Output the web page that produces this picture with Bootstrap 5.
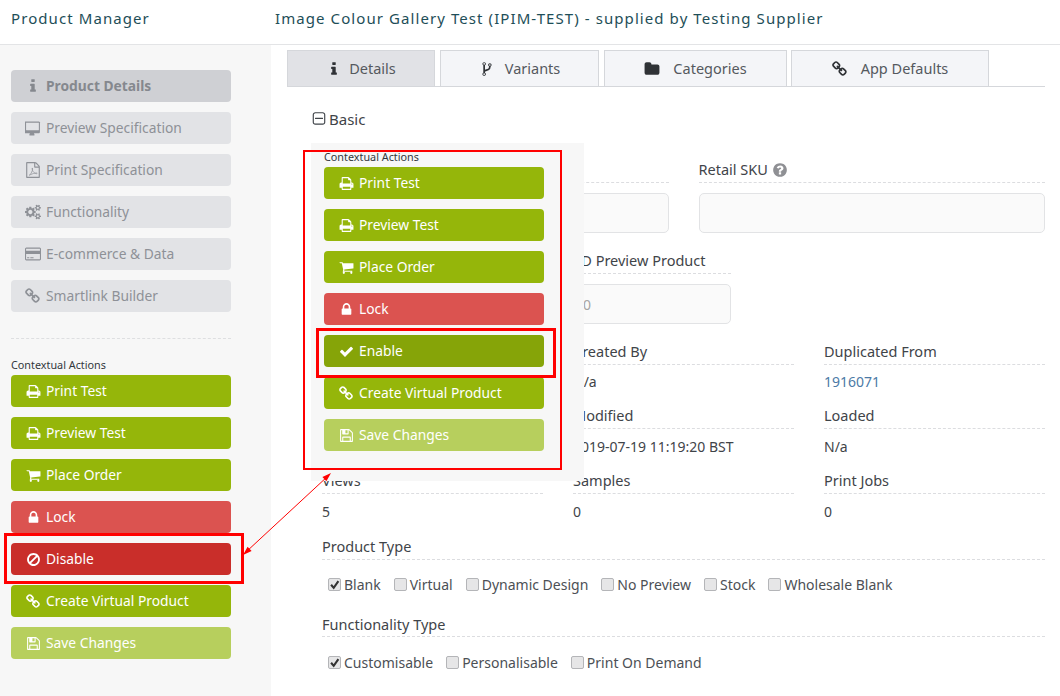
<!DOCTYPE html>
<html lang="en">
<head>
<meta charset="utf-8">
<title>Product Manager</title>
<link href="https://cdn.jsdelivr.net/npm/bootstrap@5.3.0/dist/css/bootstrap.min.css" rel="stylesheet">
<style>
:root{--green:#95b60a;}
html,body{height:696px;overflow:hidden}
body{position:relative;font-family:"Noto Sans","Open Sans",sans-serif;font-size:13.8px;color:#3f4449;background:#fff}
.defs{position:absolute;width:0;height:0}
.ic{width:15px;height:15px;fill:currentColor;flex:none}
.top-bar{height:45px;padding-bottom:8px;border-bottom:1px solid #e3e4e6;color:#1e4e58;font-size:15px;letter-spacing:1.08px}
.brand-name{width:275px;padding-left:11px}
.shell{height:651px}
.side-col{width:271px;background:#f7f7f7;padding:25px 39px 0 11px;flex:none}
.act{display:flex;align-items:center;gap:5px;width:220px;height:32px;padding:0 0 0 15px;margin-bottom:10px;border:0;border-radius:4px;font-size:13.8px;text-align:left;color:#fff;background:var(--green)}
.act:hover,.act:disabled{color:#fff;background:var(--green)}
.act-nav{color:#8e9197;background:#e2e3e6;padding-left:14px;gap:5px}
.act-nav .ic{width:16px;height:16px}
.act-nav:hover{color:#8e9197;background:#e2e3e6}
.act-cur,.act-cur:hover{background:#cfd0d4;font-weight:700;color:#85888e}
.act-red,.act-red:hover{background:#db5350}
.act-dark,.act-dark:hover{background:#c92e2a}
.act-ok,.act-ok:hover{background:#86a408}
.act-save,.act-save:disabled{background:#b7cf5d;opacity:1}
.side-rule{border-top:1px dashed #dedfe1;margin:26px 0 19px;width:220px}
.cap{font-size:10.8px;line-height:14px;margin-bottom:3px;color:#33383d}
.pane{padding:5px 15px 0 16px}
.tabs{gap:5px;border-bottom:1px solid #d5d7db;height:37px}
.tabs .nav-link{display:flex;align-items:center;justify-content:center;gap:13px;height:37px;padding:0;border:1px solid #d5d7db;border-radius:0;background:#f4f5f8;color:#55595e;font-size:14.5px}
.tabs .nav-link.active{background:#e1e2e6;color:#55595e;border-color:#d5d7db}
.tabs .ic{color:#2f3236;width:16px;height:16px}
.tabs .nav-link.t1{width:148px;gap:7px}
.tabs .nav-link.t2{width:159px;gap:10px}
.t3{width:183px}.t4{width:198px;margin-left:-1px}
.fold{display:flex;align-items:center;gap:2px;margin:23px 0 0 24px;font-size:15px;line-height:18px;color:#3f4449}
.fold .ic{width:16px;height:16px}
.form-area{padding-left:35px}
.form-area .row{--bs-gutter-x:30px}
.lbl{border-bottom:1px dashed #dcdde0;font-size:14.5px;line-height:18px;height:23px;margin:0;color:#3f4449;white-space:nowrap}
.lbl .ic{width:16px;height:16px;color:#8f9094;vertical-align:-3px}
.inp{height:40px;margin-top:10px;padding-left:9px;background:#fafafa;border:1px solid #e2e3e5;border-radius:5px;font-size:14px;color:#a5a5a5}
.inp:focus{background:#fafafa;color:#a5a5a5}
.val{font-size:14px;line-height:18px;margin-top:8px;color:#3f4449}
.val a{color:#4c7aa6;text-decoration:none}
.r1{margin-top:32px}.r2{margin-top:18px}.r3{margin-top:18px}
.r4{margin-top:15px}.r5{margin-top:15px}
.r4 .val,.r5 .val{margin-top:9px}
.r6{margin-top:16px}
.r7{margin-top:20px;line-height:20px}
.checks{display:flex;align-items:center;padding-left:6px;margin-top:15px;height:20px;font-size:14px;color:#4c5055}
.r6 + .checks{margin-top:14px}
.chk{display:flex;align-items:center;gap:3px;margin:0 13px 0 0;white-space:nowrap}
.chk .form-check-input{width:13px;height:13px;margin:0;border:1px solid #b4b5b8;border-radius:2px;background-color:#e6e6e7;opacity:1}
.chk .form-check-input:checked{background-color:#e6e6e7;border-color:#b4b5b8;background-size:12px;background-image:url("data:image/svg+xml,%3csvg xmlns='http://www.w3.org/2000/svg' viewBox='0 0 12 12'%3e%3cpath fill='none' stroke='%23333' stroke-width='2' d='M2.5 6l2.5 3 4.5-6.5'/%3e%3c/svg%3e")}
.popout{position:absolute;left:311px;top:143px;width:273px;height:338px;background:#f7f7f7;padding:7px 0 0 13px}
.popout .cap{margin-bottom:3px}
.redbox{position:absolute;border:2px solid #f00;pointer-events:none}
.rb-outer{left:303px;top:150px;width:259px;height:320px}
.rb-enable{left:316px;top:328px;width:240px;height:50px;border-width:3px}
.rb-disable{left:4px;top:533px;width:240px;height:51px;border-width:3px}
.pointer{position:absolute;left:240px;top:470px;width:95px;height:90px;pointer-events:none}
</style>
</head>
<body>
<svg class="defs" aria-hidden="true">
<symbol id="i-info" viewBox="0 0 1792 1792"><path d="M1216 1344v128q0 26-19 45t-45 19h-512q-26 0-45-19t-19-45v-128q0-26 19-45t45-19h64v-384h-64q-26 0-45-19t-19-45v-128q0-26 19-45t45-19h384q26 0 45 19t19 45v576h64q26 0 45 19t19 45zm-128-1152v192q0 26-19 45t-45 19h-256q-26 0-45-19t-19-45v-192q0-26 19-45t45-19h256q26 0 45 19t19 45z"/></symbol>
<symbol id="i-desktop" viewBox="0 0 1920 1792"><path d="M1664 1120v-832q0-13-9.5-22.5t-22.5-9.5h-1472q-13 0-22.5 9.5t-9.5 22.5v832q0 13 9.5 22.5t22.5 9.5h1472q13 0 22.5-9.5t9.5-22.5zm128-832v1088q0 66-47 113t-113 47h-544q0 37 16 77.5t32 71 16 43.5q0 26-19 45t-45 19h-512q-26 0-45-19t-19-45q0-14 16-44t32-70 16-78h-544q-66 0-113-47t-47-113v-1088q0-66 47-113t113-47h1632q66 0 113 47t47 113z"/></symbol>
<symbol id="i-pdf" viewBox="0 0 1792 1792"><path fill-rule="evenodd" d="M1596 380q28 28 48 76t20 88v1152q0 40-28 68t-68 28h-1344q-40 0-68-28t-28-68v-1600q0-40 28-68t68-28h896q40 0 88 20t76 48zm-444-244v376h376q-10-29-22-41l-313-313q-12-12-41-22zm384 1528v-1024h-416q-40 0-68-28t-28-68v-416h-768v1536h1280z"/><path fill="none" stroke="currentColor" stroke-width="80" d="M480 1480c120-60 260-300 340-520 40-110 40-240 10-290-40 0-40 140 20 280 70 170 200 290 330 340 110 40 200 10 180-30-30-50-220-30-420 30-190 60-380 150-460 190z"/></symbol>
<symbol id="i-cogs" viewBox="0 0 1920 1792"><path d="M896 896q0-106-75-181t-181-75-181 75-75 181 75 181 181 75 181-75 75-181zm768 512q0-52-38-90t-90-38-90 38-38 90q0 53 37.5 90.5t90.5 37.5 90.5-37.5 37.5-90.5zm0-1024q0-52-38-90t-90-38-90 38-38 90q0 53 37.5 90.5t90.5 37.5 90.5-37.5 37.5-90.5zm-384 421v185q0 10-7 19.5t-16 10.5l-155 24q-11 35-32 76 34 48 90 115 7 11 7 20 0 12-7 19-23 30-82.5 89.5t-78.5 59.5q-11 0-21-7l-115-90q-37 19-77 31-11 108-23 155-7 24-30 24h-186q-11 0-20-7.5t-10-17.5l-23-153q-34-10-75-31l-118 89q-7 7-20 7-11 0-21-8-144-133-144-160 0-9 7-19 10-14 41-53t47-61q-23-44-35-82l-152-24q-10-1-17-9.5t-7-19.5v-185q0-10 7-19.5t16-10.5l155-24q11-35 32-76-34-48-90-115-7-11-7-20 0-12 7-20 22-30 82-89t79-59q11 0 21 7l115 90q34-18 77-32 11-108 23-154 7-24 30-24h186q11 0 20 7.5t10 17.5l23 153q34 10 75 31l118-89q8-7 20-7 11 0 21 8 144 133 144 160 0 8-7 19-12 16-42 54t-45 60q23 48 34 82l152 23q10 2 17 10.5t7 19.5zm640 533v140q0 16-149 31-12 27-30 52 51 113 51 138 0 4-4 7-122 71-124 71-8 0-46-47t-52-68q-20 2-30 2t-30-2q-14 21-52 68t-46 47q-2 0-124-71-4-3-4-7 0-25 51-138-18-25-30-52-149-15-149-31v-140q0-16 149-31 13-29 30-52-51-113-51-138 0-4 4-7 4-2 35-20t59-34 30-16q8 0 46 46.5t52 67.5q20-2 30-2t30 2q51-71 92-112l6-2q4 0 124 70 4 3 4 7 0 25-51 138 17 23 30 52 149 15 149 31zm0-1024v140q0 16-149 31-12 27-30 52 51 113 51 138 0 4-4 7-122 71-124 71-8 0-46-47t-52-68q-20 2-30 2t-30-2q-14 21-52 68t-46 47q-2 0-124-71-4-3-4-7 0-25 51-138-18-25-30-52-149-15-149-31v-140q0-16 149-31 13-29 30-52-51-113-51-138 0-4 4-7 4-2 35-20t59-34 30-16q8 0 46 46.5t52 67.5q20-2 30-2t30 2q51-71 92-112l6-2q4 0 124 70 4 3 4 7 0 25-51 138 17 23 30 52 149 15 149 31z"/></symbol>
<symbol id="i-card" viewBox="0 0 1920 1792"><path d="M1760 128q66 0 113 47t47 113v1216q0 66-47 113t-113 47h-1600q-66 0-113-47t-47-113v-1216q0-66 47-113t113-47h1600zm-1600 128q-13 0-22.5 9.5t-9.5 22.5v224h1664v-224q0-13-9.5-22.5t-22.5-9.5h-1600zm1600 1280q13 0 22.5-9.5t9.5-22.5v-608h-1664v608q0 13 9.5 22.5t22.5 9.5h1600zm-1504-128v-128h256v128h-256zm384 0v-128h384v128h-384z"/></symbol>
<symbol id="i-link" viewBox="0 0 1792 1792"><path d="M1456 1216q0-40-28-68l-208-208q-28-28-68-28-42 0-72 32 3 3 19 18.5t21.5 21.5 15 19 13 25.5 3.5 27.5q0 40-28 68t-68 28q-15 0-27.5-3.5t-25.5-13-19-15-21.5-21.5-18.5-19q-33 31-33 73 0 40 28 68l206 207q27 27 68 27 40 0 68-26l147-146q28-28 28-67zm-703-705q0-40-28-68l-206-207q-28-28-68-28-39 0-68 27l-147 146q-28 28-28 67 0 40 28 68l208 208q27 27 68 27 42 0 72-31-3-3-19-18.5t-21.5-21.5-15-19-13-25.5-3.5-27.5q0-40 28-68t68-28q15 0 27.5 3.5t25.5 13 19 15 21.5 21.5 18.5 19q33-31 33-73zm895 705q0 120-85 203l-147 146q-83 83-203 83-121 0-204-85l-206-207q-83-83-83-203 0-123 88-209l-88-88q-86 88-208 88-120 0-204-84l-208-208q-84-84-84-204t85-203l147-146q83-83 203-83 121 0 204 85l206 207q83 83 83 203 0 123-88 209l88 88q86-88 208-88 120 0 204 84l208 208q84 84 84 204z"/></symbol>
<symbol id="i-print" viewBox="0 0 1792 1792"><path d="M448 1536h896v-256h-896v256zm0-640h896v-384h-160q-40 0-68-28t-28-68v-160h-640v640zm1152 64q0-26-19-45t-45-19-45 19-19 45 19 45 45 19 45-19 19-45zm128 0v416q0 13-9.5 22.5t-22.5 9.5h-224v160q0 40-28 68t-68 28h-960q-40 0-68-28t-28-68v-160h-224q-13 0-22.5-9.5t-9.5-22.5v-416q0-79 56.5-135.5t135.5-56.5h64v-544q0-40 28-68t68-28h672q40 0 88 20t76 48l152 152q28 28 48 76t20 88v256h64q79 0 135.5 56.5t56.5 135.5z"/></symbol>
<symbol id="i-cart" viewBox="0 0 1792 1792"><path d="M704 1536q0 52-38 90t-90 38-90-38-38-90 38-90 90-38 90 38 38 90zm896 0q0 52-38 90t-90 38-90-38-38-90 38-90 90-38 90 38 38 90zm128-1088v512q0 24-16.5 42.5t-40.5 21.5l-1044 122q13 60 13 70 0 16-24 64h920q26 0 45 19t19 45-19 45-45 19h-1024q-26 0-45-19t-19-45q0-11 8-31.5t16-36 21.5-40 15.5-29.5l-177-823h-204q-26 0-45-19t-19-45 19-45 45-19h256q16 0 28.5 6.5t19.5 15.5 13 24.5 8 26 5.5 29.5 4.5 26h1201q26 0 45 19t19 45z"/></symbol>
<symbol id="i-lock" viewBox="0 0 1792 1792"><path d="M640 768h512v-192q0-106-75-181t-181-75-181 75-75 181v192zm832 96v576q0 40-28 68t-68 28h-960q-40 0-68-28t-28-68v-576q0-40 28-68t68-28h32v-192q0-184 132-316t316-132 316 132 132 316v192h32q40 0 68 28t28 68z"/></symbol>
<symbol id="i-ban" viewBox="0 0 1792 1792"><path d="M1440 893q0-161-87-295l-754 753q137 89 297 89 111 0 211.5-43.5t173.5-116.5 116-174.5 43-212.5zm-999 299l755-754q-135-91-300-91-148 0-273 73t-198 199-73 274q0 162 89 299zm1223-299q0 157-61 300t-163.5 246-245 164-298.5 61-298.5-61-245-164-163.5-246-61-300 61-299.5 163.5-245.5 245-164 298.5-61 298.5 61 245 164 163.5 245.5 61 299.5z"/></symbol>
<symbol id="i-check" viewBox="0 0 1792 1792"><path d="M1671 566q0 40-28 68l-724 724-136 136q-28 28-68 28t-68-28l-136-136-362-362q-28-28-28-68t28-68l136-136q28-28 68-28t68 28l294 295 656-657q28-28 68-28t68 28l136 136q28 28 28 68z"/></symbol>
<symbol id="i-save" viewBox="0 0 1792 1792"><path d="M512 1536h768v-384h-768v384zm896 0h128v-896q0-14-10-38.5t-20-34.5l-281-281q-10-10-34-20t-39-10v416q0 40-28 68t-68 28h-576q-40 0-68-28t-28-68v-416h-128v1280h128v-416q0-40 28-68t68-28h832q40 0 68 28t28 68v416zm-384-928v-320q0-13-9.5-22.5t-22.5-9.5h-192q-13 0-22.5 9.5t-9.5 22.5v320q0 13 9.5 22.5t22.5 9.5h192q13 0 22.5-9.5t9.5-22.5zm640 32v928q0 40-28 68t-68 28h-1344q-40 0-68-28t-28-68v-1344q0-40 28-68t68-28h928q40 0 88 20t76 48l280 280q28 28 48 76t20 88z"/></symbol>
<symbol id="i-fork" viewBox="0 0 1024 1792"><path d="M288 1472q0-40-28-68t-68-28-68 28-28 68 28 68 68 28 68-28 28-68zm0-1152q0-40-28-68t-68-28-68 28-28 68 28 68 68 28 68-28 28-68zm640 128q0-40-28-68t-68-28-68 28-28 68 28 68 68 28 68-28 28-68zm96 0q0 52-26 96.5t-70 69.5q-2 287-226 414-67 38-203 81-128 40-169.5 71t-41.5 100v26q44 25 70 69.5t26 96.5q0 80-56 136t-136 56-136-56-56-136q0-52 26-96.5t70-69.5v-820q-44-25-70-69.5t-26-96.5q0-80 56-136t136-56 136 56 56 136q0 52-26 96.5t-70 69.5v497q54-26 154-57 55-17 87.5-29.5t70.5-31 59-39.5 40.5-51 28-69.5 8.5-91.5q-44-25-70-69.5t-26-96.5q0-80 56-136t136-56 136 56 56 136z"/></symbol>
<symbol id="i-folder" viewBox="0 0 1792 1792"><path d="M1728 608v704q0 92-66 158t-158 66h-1216q-92 0-158-66t-66-158v-960q0-92 66-158t158-66h320q92 0 158 66t66 158v32h672q92 0 158 66t66 158z"/></symbol>
<symbol id="i-minus" viewBox="0 0 1792 1792"><path d="M1344 800v64q0 14-9 23t-23 9h-832q-14 0-23-9t-9-23v-64q0-14 9-23t23-9h832q14 0 23 9t9 23zm128 448v-832q0-66-47-113t-113-47h-832q-66 0-113 47t-47 113v832q0 66 47 113t113 47h832q66 0 113-47t47-113zm128-832v832q0 119-84.5 203.5t-203.5 84.5h-832q-119 0-203.5-84.5t-84.5-203.5v-832q0-119 84.5-203.5t203.5-84.5h832q119 0 203.5 84.5t84.5 203.5z"/></symbol>
<symbol id="i-help" viewBox="0 0 1792 1792"><path d="M1024 1376v-192q0-14-9-23t-23-9h-192q-14 0-23 9t-9 23v192q0 14 9 23t23 9h192q14 0 23-9t9-23zm256-672q0-88-55.5-163t-138.5-116-170-41q-243 0-371 213-15 24 8 42l132 100q7 6 19 6 16 0 25-12 53-68 86-92 34-24 86-24 48 0 85.5 26t37.5 59q0 38-20 61t-68 45q-63 28-115.5 86.5t-52.5 125.5v36q0 14 9 23t23 9h192q14 0 23-9t9-23q0-19 21.5-49.5t54.5-49.5q32-18 49-28.5t46-35 44.5-48 28-60.5 12.5-81zm384 192q0 209-103 385.5t-279.5 279.5-385.5 103-385.5-103-279.5-279.5-103-385.5 103-385.5 279.5-279.5 385.5-103 385.5 103 279.5 279.5 103 385.5z"/></symbol>
</svg>

<header class="top-bar d-flex align-items-center">
  <div class="brand-name">Product Manager</div>
  <div>Image Colour Gallery Test (IPIM-TEST) - supplied by Testing Supplier</div>
</header>

<div class="shell d-flex">
  <aside class="side-col">
    <button class="btn act act-nav act-cur"><svg class="ic"><use href="#i-info"/></svg>Product Details</button>
    <button class="btn act act-nav"><svg class="ic"><use href="#i-desktop"/></svg>Preview Specification</button>
    <button class="btn act act-nav"><svg class="ic"><use href="#i-pdf"/></svg>Print Specification</button>
    <button class="btn act act-nav"><svg class="ic"><use href="#i-cogs"/></svg>Functionality</button>
    <button class="btn act act-nav"><svg class="ic"><use href="#i-card"/></svg>E-commerce &amp; Data</button>
    <button class="btn act act-nav"><svg class="ic"><use href="#i-link"/></svg>Smartlink Builder</button>
    <div class="side-rule"></div>
    <div class="cap">Contextual Actions</div>
    <button class="btn act"><svg class="ic"><use href="#i-print"/></svg>Print Test</button>
    <button class="btn act"><svg class="ic"><use href="#i-print"/></svg>Preview Test</button>
    <button class="btn act"><svg class="ic"><use href="#i-cart"/></svg>Place Order</button>
    <button class="btn act act-red"><svg class="ic"><use href="#i-lock"/></svg>Lock</button>
    <button class="btn act act-dark"><svg class="ic"><use href="#i-ban"/></svg>Disable</button>
    <button class="btn act"><svg class="ic"><use href="#i-link"/></svg>Create Virtual Product</button>
    <button class="btn act act-save" disabled><svg class="ic"><use href="#i-save"/></svg>Save Changes</button>
  </aside>

  <main class="pane flex-grow-1">
    <ul class="nav tabs">
      <li class="nav-item"><a class="nav-link active t1" href="#"><svg class="ic"><use href="#i-info"/></svg>Details</a></li>
      <li class="nav-item"><a class="nav-link t2" href="#"><svg class="ic"><use href="#i-fork"/></svg>Variants</a></li>
      <li class="nav-item"><a class="nav-link t3" href="#"><svg class="ic"><use href="#i-folder"/></svg>Categories</a></li>
      <li class="nav-item"><a class="nav-link t4" href="#"><svg class="ic"><use href="#i-link"/></svg>App Defaults</a></li>
    </ul>
    <div class="fold"><svg class="ic"><use href="#i-minus"/></svg>Basic</div>
    <div class="form-area">
      <div class="row r1">
        <div class="col-6"><div class="lbl">&nbsp;</div><input class="form-control inp" aria-label="Field"></div>
        <div class="col-6"><div class="lbl">Retail SKU <svg class="ic"><use href="#i-help"/></svg></div><input class="form-control inp" aria-label="Retail SKU"></div>
      </div>
      <div class="row r2">
        <div class="col-4"><div class="lbl">&nbsp;</div></div>
        <div class="col-3"><div class="lbl">3D Preview Product</div><input class="form-control inp" value="0" aria-label="3D Preview Product"></div>
      </div>
      <div class="row r3">
        <div class="col-4"><div class="lbl">&nbsp;</div><div class="val">&nbsp;</div></div>
        <div class="col-4"><div class="lbl">Created By</div><div class="val">N/a</div></div>
        <div class="col-4"><div class="lbl">Duplicated From</div><div class="val"><a href="#">1916071</a></div></div>
      </div>
      <div class="row r4">
        <div class="col-4"><div class="lbl">&nbsp;</div><div class="val">&nbsp;</div></div>
        <div class="col-4"><div class="lbl">Modified</div><div class="val">2019-07-19 11:19:20 BST</div></div>
        <div class="col-4"><div class="lbl">Loaded</div><div class="val">N/a</div></div>
      </div>
      <div class="row r5">
        <div class="col-4"><div class="lbl">Views</div><div class="val">5</div></div>
        <div class="col-4"><div class="lbl">Samples</div><div class="val">0</div></div>
        <div class="col-4"><div class="lbl">Print Jobs</div><div class="val">0</div></div>
      </div>
      <div class="r6 lbl">Product Type</div>
      <div class="checks">
        <label class="chk"><input class="form-check-input" type="checkbox" checked>Blank</label>
        <label class="chk"><input class="form-check-input" type="checkbox">Virtual</label>
        <label class="chk"><input class="form-check-input" type="checkbox">Dynamic Design</label>
        <label class="chk"><input class="form-check-input" type="checkbox">No Preview</label>
        <label class="chk"><input class="form-check-input" type="checkbox">Stock</label>
        <label class="chk"><input class="form-check-input" type="checkbox">Wholesale Blank</label>
      </div>
      <div class="r7 lbl">Functionality Type</div>
      <div class="checks">
        <label class="chk"><input class="form-check-input" type="checkbox" checked>Customisable</label>
        <label class="chk"><input class="form-check-input" type="checkbox">Personalisable</label>
        <label class="chk"><input class="form-check-input" type="checkbox">Print On Demand</label>
      </div>
    </div>
  </main>
</div>

<div class="popout">
  <div class="cap">Contextual Actions</div>
  <button class="btn act"><svg class="ic"><use href="#i-print"/></svg>Print Test</button>
  <button class="btn act"><svg class="ic"><use href="#i-print"/></svg>Preview Test</button>
  <button class="btn act"><svg class="ic"><use href="#i-cart"/></svg>Place Order</button>
  <button class="btn act act-red"><svg class="ic"><use href="#i-lock"/></svg>Lock</button>
  <button class="btn act act-ok"><svg class="ic"><use href="#i-check"/></svg>Enable</button>
  <button class="btn act"><svg class="ic"><use href="#i-link"/></svg>Create Virtual Product</button>
  <button class="btn act act-save" disabled><svg class="ic"><use href="#i-save"/></svg>Save Changes</button>
</div>
<div class="redbox rb-outer"></div>
<div class="redbox rb-enable"></div>
<div class="redbox rb-disable"></div>
<svg class="pointer" viewBox="0 0 95 90" aria-hidden="true">
  <line x1="6" y1="82" x2="88" y2="6" stroke="#f00" stroke-width="1"/>
  <path d="M3 85l8.600-3.900-4-4.400z M91 3l-8.600 3.900 4 4.400z" fill="#f00"/>
</svg>
<script src="https://cdn.jsdelivr.net/npm/bootstrap@5.3.0/dist/js/bootstrap.bundle.min.js"></script>
</body>
</html>
